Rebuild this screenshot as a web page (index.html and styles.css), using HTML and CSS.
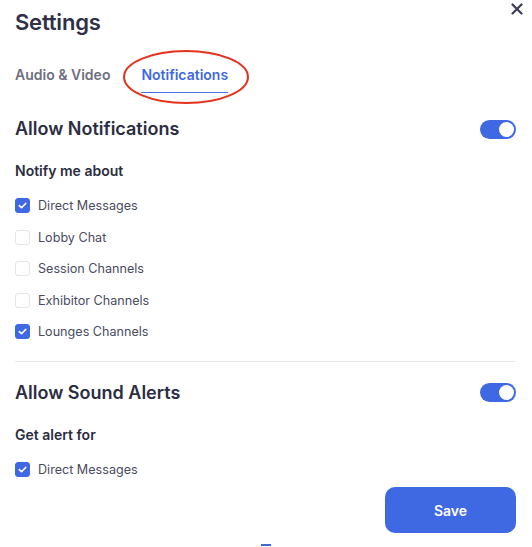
FILE: index.html
```html
<!DOCTYPE html>
<html lang="en">

<head>
    <meta charset="UTF-8">
    <meta name="viewport" content="width=device-width, initial-scale=1.0">
    <title>Settings</title>
    <link rel="stylesheet" href="styles.css">
</head>

<body>
    <div class="settings-modal">
        <div class="modal-header">
            <h1>Settings</h1>
            <button class="close-btn" aria-label="Close">
                <svg width="12" height="12" viewBox="0 0 12 12">
                    <path d="M1.5 1.5 L10.5 10.5 M10.5 1.5 L1.5 10.5" stroke="#3b3d55" stroke-width="2.2" stroke-linecap="round" />
                </svg>
            </button>
        </div>

        <div class="tabs">
            <div class="tab">Audio &amp; Video</div>
            <div class="tab active">Notifications
                <!-- annotation circle round the active tab -->
                <svg class="tab-mark" width="128" height="56" viewBox="0 0 128 56">
                    <ellipse cx="64" cy="28" rx="62" ry="26" fill="none" stroke="#e5321c" stroke-width="2" />
                </svg>
            </div>
        </div>

        <div class="section first">
            <div class="section-head">
                <h2>Allow Notifications</h2>
                <div class="toggle on"><div class="knob"></div></div>
            </div>
            <h3>Notify me about</h3>
            <ul class="check-list">
                <li><span class="check checked"></span>Direct Messages</li>
                <li><span class="check"></span>Lobby Chat</li>
                <li><span class="check"></span>Session Channels</li>
                <li><span class="check"></span>Exhibitor Channels</li>
                <li><span class="check checked"></span>Lounges Channels</li>
            </ul>
        </div>

        <hr class="divider">

        <div class="section">
            <div class="section-head">
                <h2>Allow Sound Alerts</h2>
                <div class="toggle on"><div class="knob"></div></div>
            </div>
            <h3>Get alert for</h3>
            <ul class="check-list">
                <li><span class="check checked"></span>Direct Messages</li>
            </ul>
        </div>

        <div class="modal-footer">
            <button class="save-btn">Save</button>
        </div>
        <div class="scroll-hint"></div>
    </div>
</body>

</html>
```

FILE: styles.css
```css
/* Page */
body {
    margin: 0;
    background: #ffffff;
    font-family: "Inter", "Noto Sans", sans-serif;
    color: #2b2d42;
}

.settings-modal {
    padding: 8px 16px 0 15px;
    display: flex;
    flex-direction: column;
}

/* Header */
.modal-header {
    display: flex;
    justify-content: space-between;
    align-items: flex-start;
}

.modal-header h1 {
    margin: 0;
    font-size: 22px;
    font-weight: 600;
    line-height: 28px;
    color: #2e3047;
    letter-spacing: -0.2px;
}

.close-btn {
    border: none;
    background: none;
    padding: 0;
    margin: -5px -7px 0 0;
    width: 12px;
    height: 12px;
    cursor: pointer;
}

/* Tabs */
.tabs {
    display: flex;
    gap: 31px;
    margin-top: 30px;
}

.tab {
    position: relative;
    font-size: 14px;
    font-weight: 600;
    color: #6d6f80;
    padding-bottom: 9px;
    line-height: 17px;
}

.tab.active {
    color: #3f68e3;
    border-bottom: 1.5px solid #4a72e6;
}

.tab-mark {
    position: absolute;
    left: -19px;
    top: -17px;
    pointer-events: none;
}

/* Sections */
.section {
    display: flex;
    flex-direction: column;
}

.section-head {
    display: flex;
    justify-content: space-between;
    align-items: center;
    margin-top: 19px;
}

.section.first .section-head {
    margin-top: 24px;
}

.section-head h2 {
    margin: 0;
    font-size: 18px;
    font-weight: 600;
    color: #2b2d42;
    line-height: 24px;
}

.toggle {
    width: 36px;
    height: 19px;
    border-radius: 10px;
    background: #3f68e3;
    position: relative;
}

.toggle .knob {
    position: absolute;
    right: 2px;
    top: 2px;
    width: 15px;
    height: 15px;
    border-radius: 50%;
    background: #ffffff;
}

.section h3 {
    margin: 21px 0 0;
    font-size: 14px;
    font-weight: 600;
    line-height: 18px;
    color: #2b2d42;
}

.check-list {
    list-style: none;
    padding: 0;
    margin: 10px 0 0;
}

.check-list li {
    display: flex;
    align-items: center;
    height: 31.5px;
    font-size: 12.6px;
    color: #4a4c5f;
}

.check {
    width: 13px;
    height: 13px;
    border: 1px solid #e4e4ea;
    border-radius: 3px;
    margin-right: 8px;
    flex-shrink: 0;
}

.check.checked {
    background: #3f68e3;
    border-color: #3f68e3;
    background-image: url("data:image/svg+xml,%3Csvg xmlns='http://www.w3.org/2000/svg' viewBox='0 0 14 14'%3E%3Cpath d='M3.6 7.2 L6 9.4 L10.4 4.8' fill='none' stroke='white' stroke-width='1.8' stroke-linecap='round' stroke-linejoin='round'/%3E%3C/svg%3E");
    background-size: 100% 100%;
}

.divider {
    border: none;
    border-top: 1px solid #e9e9ee;
    margin: 13px 0 0;
}

/* Footer */
.modal-footer {
    display: flex;
    justify-content: flex-end;
    margin-top: 2px;
}

.save-btn {
    width: 131px;
    height: 46px;
    border: none;
    border-radius: 10px;
    background: #3f68e3;
    color: #ffffff;
    font-family: inherit;
    font-size: 14px;
    font-weight: 600;
}

.scroll-hint {
    align-self: center;
    width: 10px;
    height: 2px;
    background: #3f68e3;
    margin-top: 11px;
}
```
